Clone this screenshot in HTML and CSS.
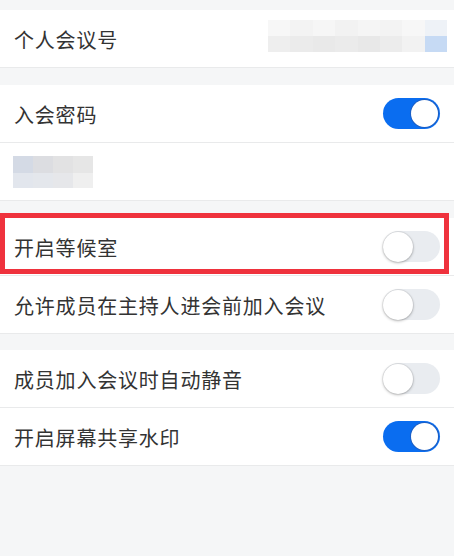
FILE: index.html
```html
<!DOCTYPE html>
<html lang="zh-CN">
<head>
<meta charset="utf-8">
<link rel="stylesheet" href="styles.css">
</head>
<body>
<div class="page">
  <div class="group">
    <div class="row">
      <span class="label">个人会议号</span>
      <div class="mosaic mosaic-id">
        <div class="m-top">
          <i style="background:#f7f7f7"></i><i style="background:#f3f3f3"></i><i style="background:#f6f6f6"></i><i style="background:#f2f2f2"></i><i style="background:#f5f5f5"></i><i style="background:#f3f3f3"></i><i style="background:#f7f7f7"></i><i style="background:#eef2f7"></i>
        </div>
        <div class="m-bot">
          <i style="background:#eeeeee"></i><i style="background:#ebebeb"></i><i style="background:#e9e9e9"></i><i style="background:#ebebeb"></i><i style="background:#e8e8e8"></i><i style="background:#ececec"></i><i style="background:#f2f2f2"></i><i style="background:#c6daf4"></i>
        </div>
      </div>
    </div>
  </div>

  <div class="group">
    <div class="row">
      <span class="label">入会密码</span>
      <span class="toggle on"><span class="knob"></span></span>
    </div>
    <div class="row">
      <div class="mosaic mosaic-pw">
        <div class="m-top">
          <i style="background:#d4dae5"></i><i style="background:#dcdde1"></i><i style="background:#e2e2e3"></i><i style="background:#e6e6e6"></i>
        </div>
        <div class="m-bot">
          <i style="background:#e2e6ed"></i><i style="background:#e4e7ec"></i><i style="background:#e6e7ea"></i><i style="background:#efefef"></i>
        </div>
      </div>
    </div>
  </div>

  <div class="group">
    <div class="row highlighted">
      <span class="label">开启等候室</span>
      <span class="toggle"><span class="knob"></span></span>
      <span class="mark"></span>
    </div>
    <div class="row">
      <span class="label">允许成员在主持人进会前加入会议</span>
      <span class="toggle"><span class="knob"></span></span>
    </div>
  </div>

  <div class="group last">
    <div class="row">
      <span class="label">成员加入会议时自动静音</span>
      <span class="toggle"><span class="knob"></span></span>
    </div>
    <div class="row">
      <span class="label">开启屏幕共享水印</span>
      <span class="toggle on"><span class="knob"></span></span>
    </div>
  </div>
</div>
</body>
</html>
```

FILE: styles.css
```css
* { box-sizing: border-box; }
html, body {
  margin: 0;
  padding: 0;
  background: #f5f6f7;
}
body {
  width: 454px;
  height: 556px;
  overflow: hidden;
  font-family: "Noto Sans CJK SC", "Noto Sans", sans-serif;
  color: #333333;
}
.page {
  padding-top: 10px;
  display: flex;
  flex-direction: column;
}
.group {
  background: #ffffff;
  display: flex;
  flex-direction: column;
}
.group + .group { margin-top: 17px; }
.group.last { margin-top: 16px; }
.row {
  position: relative;
  height: 58px;
  border-bottom: 1px solid #e9eaeb;
  display: flex;
  align-items: center;
  justify-content: space-between;
  padding: 0 14px 0 14px;
}
.label {
  font-size: 20px;
  line-height: 1;
  letter-spacing: 0.8px;
  padding-top: 3px;
}
.toggle {
  position: relative;
  width: 57px;
  height: 31px;
  border-radius: 16px;
  background: #e9ecf0;
  flex: none;
  display: flex;
  align-items: center;
  justify-content: flex-start;
}
.toggle .knob {
  width: 30px;
  height: 30px;
  border-radius: 50%;
  background: #ffffff;
  box-shadow: 0 1px 3px rgba(0,0,0,0.28), 0 0 0 1px rgba(0,0,0,0.05);
}
.toggle.on {
  background: #0a6df0;
  justify-content: flex-end;
  padding-right: 2px;
}
.toggle.on .knob {
  width: 27px;
  height: 27px;
  box-shadow: 0 0 0 1px #1c5fc4;
}
.mosaic {
  display: flex;
  flex-direction: column;
  filter: blur(0.6px);
}
.mosaic .m-top, .mosaic .m-bot { display: flex; }
.mosaic i { display: block; flex: 1 1 0; }
.mosaic-id {
  width: 179px;
  margin-top: -6px;
  margin-right: -7px;
}
.mosaic-id i { height: 16px; }
.mosaic-pw { width: 80px; margin-left: -1px; }
.mosaic-pw .m-top i { height: 17px; }
.mosaic-pw .m-bot i { height: 15px; }
.mark {
  position: absolute;
  left: 0;
  top: -5px;
  right: 5px;
  bottom: 1px;
  border: 5px solid #ef323d;
  pointer-events: none;
}
```
